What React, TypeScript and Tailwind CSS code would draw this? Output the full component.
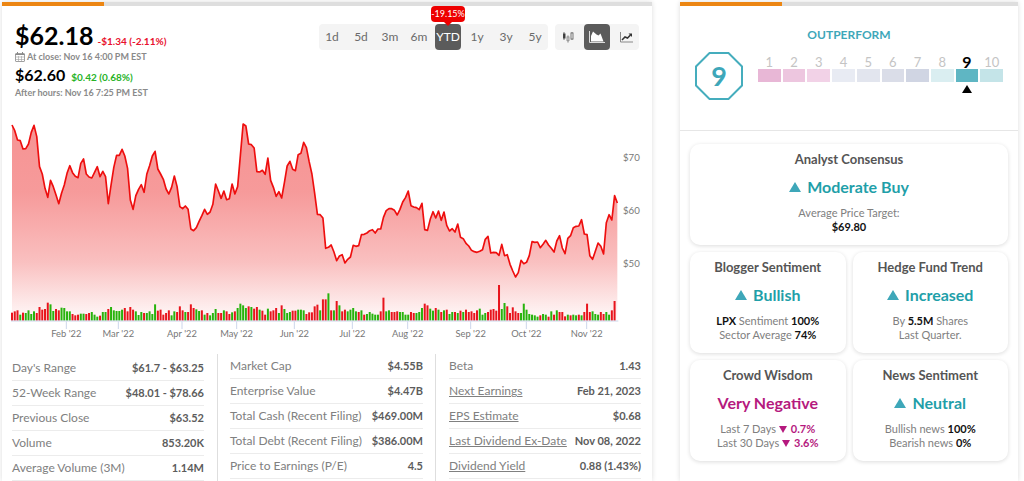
import type { ReactNode } from 'react';

const RANGES = ['1d', '5d', '3m', '6m', 'YTD', '1y', '3y', '5y'];

// Closing price line, as heights in chart units (0 is the top of the plot)
const LINE = `45 62 90 92 117 116 102 67 46 80 170 192 235 262 211 230 255 281 250 225 190 167 188 199 203
160 147 192 201 204 187 170 200 184 200 281 225 172 136 136 118 138 175 270 298 257 238 224 247 192
167 138 124 177 192 208 237 252 232 198 230 290 296 288 298 357 362 353 334 317 298 313 306 283 222
243 265 243 269 266 222 252 230 136 42 48 102 104 114 185 186 181 193 144 211 232 259 245 264 218
168 154 178 182 134 130 97 113 155 192 250 313 314 324 415 412 405 426 452 438 434 459 448 441 406
409 407 374 373 369 362 359 369 357 357 322 302 296 296 301 315 298 276 263 243 287 291 293 299 280
359 361 328 305 324 303 331 306 346 363 356 366 342 382 386 400 408 421 425 427 424 419 388 379 429
427 428 436 403 437 434 463 483 501 488 451 461 457 437 395 397 396 413 403 391 405 415 426 393 377
414 431 385 377 353 349 348 329 372 374 437 448 424 399 409 432 338 314 330 257 279`
  .split(/\s+/)
  .map(Number);

// Daily volume: bar height and direction (r = down, g = up)
const VOLUME = `24r 28r 31r 18g 24r 23g 31g 20g 28g 23r 41r 33r 35r 54r 49g 29g 35r 31r 39g 38g 28g 28g 20r 16r 18r
21g 21g 20r 23r 26g 18g 12g 15r 26g 26g 35r 41g 31g 29g 29g 33g 38r 28r 41r 33r 28g 17g 26g 23r 23g
28g 20g 49g 30r 33r 18r 23r 31r 16g 28g 26r 43r 31r 26g 26r 49r 38r 34g 29g 31r 18g 23r 16g 23g 35g
23r 23r 31g 28r 20r 25g 28r 38g 51g 46g 38g 43r 41g 36r 41r 33g 30r 18r 36g 28r 31r 38r 23g 46r 35g
23g 26g 30r 30r 33g 33g 31g 20r 25r 25r 43r 48r 31g 64r 64r 82g 31r 31g 59r 46g 28r 33r 28g 33g 38g
28g 26r 31g 18r 20g 26g 21g 18g 18g 28r 69r 28g 31g 26r 26r 28r 26g 26g 18g 18g 26r 23r 23g 26g 38g
51r 46r 36g 30g 38r 33g 26r 31g 33r 20g 26g 26r 23g 30r 26g 33r 26r 28r 23r 31r 36g 18g 23g 26r 33r
35r 30r 107r 35g 53g 43r 23r 40r 28r 23r 23g 51g 33g 20g 18g 16g 12g 16r 20g 18g 12r 28g 18r 31g 26r
26r 13r 18g 16r 18g 16g 18r 16g 26r 51r 26r 28g 20g 18g 26r 20r 26g 18g 31r 59r`
  .split(/\s+/)
  .map((bar) => ({ height: parseInt(bar, 10), up: bar.endsWith('g') }));

const MONTHS = [
  { label: "Feb '22", x: 199 },
  { label: "Mar '22", x: 355 },
  { label: "Apr '22", x: 546 },
  { label: "May '22", x: 710 },
  { label: "Jun '22", x: 883 },
  { label: "Jul '22", x: 1057 },
  { label: "Aug '22", x: 1223 },
  { label: "Sep '22", x: 1412 },
  { label: "Oct '22", x: 1579 },
  { label: "Nov '22", x: 1760 },
];

const PRICES = [
  { label: '$70', y: 141 },
  { label: '$60', y: 300 },
  { label: '$50', y: 460 },
];

const STATS = [
  [
    { label: "Day's Range", value: '$61.7 - $63.25' },
    { label: '52-Week Range', value: '$48.01 - $78.66' },
    { label: 'Previous Close', value: '$63.52' },
    { label: 'Volume', value: '853.20K' },
    { label: 'Average Volume (3M)', value: '1.14M' },
  ],
  [
    { label: 'Market Cap', value: '$4.55B' },
    { label: 'Enterprise Value', value: '$4.47B' },
    { label: 'Total Cash (Recent Filing)', value: '$469.00M' },
    { label: 'Total Debt (Recent Filing)', value: '$386.00M' },
    { label: 'Price to Earnings (P/E)', value: '4.5' },
  ],
  [
    { label: 'Beta', value: '1.43' },
    { label: 'Next Earnings', value: 'Feb 21, 2023', link: true },
    { label: 'EPS Estimate', value: '$0.68', link: true },
    { label: 'Last Dividend Ex-Date', value: 'Nov 08, 2022', link: true },
    { label: 'Dividend Yield', value: '0.88 (1.43%)', link: true },
  ],
];

const COLUMN_STYLES = ['pt-0.5 pr-[13px]', 'border-l border-[#dedede] px-3', 'border-l border-[#dedede] pl-[13px]'];

const SCORES = [
  'bg-[#e8b7d6]',
  'bg-[#edc6df]',
  'bg-[#f2d2e7]',
  'bg-[#e8ebf3]',
  'bg-[#e2e5ee]',
  'bg-[#dadde8]',
  'bg-[#d0d5e3]',
  'bg-[#daeef1]',
  'bg-[#5fb6c3]',
  'bg-[#c4e4e8]',
];

const LEFT = 36;
const RIGHT = 1852;
const BASE = 632;

function Panel({ className, children }: { className?: string; children: ReactNode }) {
  return (
    <section className={`min-w-0 bg-white shadow-[0_0_5px_rgba(0,0,0,0.14)] ${className ?? ''}`}>
      <div className="h-1 bg-[#dedede]">
        <div className="h-1 w-[102px] bg-[#ec8613]" />
      </div>
      {children}
    </section>
  );
}

function PriceChart() {
  const step = (RIGHT - LEFT) / (LINE.length - 1);
  const points = LINE.map((y, i) => `${LEFT + i * step},${y}`).join(' ');

  return (
    <svg viewBox="6 0 1950 732" className="block w-full" role="img" aria-label="Year to date price chart">
      <defs>
        <linearGradient id="area" x1="0" y1="42" x2="0" y2={BASE} gradientUnits="userSpaceOnUse">
          <stop offset="0" stopColor="#f58a8a" stopOpacity="0.92" />
          <stop offset="0.35" stopColor="#f58a8a" stopOpacity="0.86" />
          <stop offset="0.7" stopColor="#f58a8a" stopOpacity="0.54" />
          <stop offset="1" stopColor="#f58a8a" stopOpacity="0.04" />
        </linearGradient>
      </defs>
      <polygon points={`${LEFT},${BASE} ${points} ${RIGHT},${BASE}`} fill="url(#area)" />
      {VOLUME.map((bar, i) => (
        <rect
          key={i}
          x={LEFT - 3 + i * step}
          y={BASE - bar.height}
          width="6"
          height={bar.height}
          fill={bar.up ? '#27b30c' : '#e8141c'}
        />
      ))}
      <polyline points={points} fill="none" stroke="#ee0e0e" strokeWidth="5" strokeLinejoin="round" />
      <line x1="33" x2="1855" y1="633" y2="633" stroke="#ccd6eb" strokeWidth="3" />
      {MONTHS.map(({ label, x }) => (
        <g key={label}>
          <line x1={x} x2={x} y1="634" y2="657" stroke="#ccd6eb" strokeWidth="3" />
          <text x={x} y="682" textAnchor="middle" fontSize="28" fill="#777">
            {label}
          </text>
        </g>
      ))}
      {PRICES.map(({ label, y }) => (
        <text key={label} x="1869" y={y + 11} fontSize="29" fill="#777">
          {label}
        </text>
      ))}
    </svg>
  );
}

function ChartControls() {
  return (
    <div className="flex gap-[7px] text-xs text-[#6b6b6b]">
      <div className="flex h-[26px] gap-[3px] rounded bg-[#f4f4f4]">
        {RANGES.map((range) => (
          <button
            key={range}
            className={
              range === 'YTD'
                ? 'relative w-[26px] rounded bg-[#5b5b5b] text-white'
                : 'w-[26px]'
            }
          >
            {range}
            {range === 'YTD' && (
              <span className="absolute -top-[18px] left-1/2 flex h-4 w-[34px] -translate-x-1/2 items-center justify-center rounded bg-[#ee0000] text-[9px] text-white">
                -19.15%
                <span className="absolute top-full border-x-4 border-t-4 border-x-transparent border-t-[#ee0000]" />
              </span>
            )}
          </button>
        ))}
      </div>
      <div className="flex h-[26px] gap-[3px] rounded bg-[#f4f4f4]">
        <button className="flex w-[26px] items-center justify-center" aria-label="Candlestick chart">
          <svg viewBox="0 0 12 12" className="size-3" stroke="#777">
            <path d="M2 1v8M6 4.5v7M10 1v8" />
            <rect x="1.5" y="3" width="1.5" height="4" fill="#333" stroke="#444" />
            <rect x="5" y="6" width="2" height="3.5" fill="#ccc" stroke="#999" />
            <rect x="9" y="2" width="2" height="6" fill="#f4f4f4" />
          </svg>
        </button>
        <button className="flex w-[26px] items-center justify-center rounded bg-[#5b5b5b]" aria-label="Area chart">
          <svg viewBox="0 0 18 14" className="h-3.5 w-[18px]" fill="none">
            <path d="M1.5 1v11.5H17" stroke="#ddd" />
            <path d="M3 11.5V6L5 1.5L8.5 4.5L10.5 5.5L12.5 3.5L15.5 11.5Z" fill="#fff" />
          </svg>
        </button>
        <button className="flex w-[26px] items-center justify-center" aria-label="Line chart">
          <svg viewBox="0 0 14 12" className="h-3 w-3.5" fill="none">
            <path d="M1.5 1v10H14" stroke="#888" />
            <path d="M3 9L6 6L8.5 7L11.5 4" stroke="#333" strokeWidth="1.5" />
            <path d="M9.5 2.5H13V6Z" fill="#333" />
          </svg>
        </button>
      </div>
    </div>
  );
}

function CalendarIcon() {
  return (
    <svg viewBox="0 0 10 10" className="size-2.5" stroke="#a0a0a0" fill="none">
      <rect x="0.5" y="1.5" width="9" height="8" rx="0.5" />
      <path d="M0.5 2.5h9M2.5 0v2M7.5 0v2" stroke="#8a8a8a" />
      <path d="M1 5h8M1 7.5h8M3.5 4v5M6.5 4v5" strokeWidth="0.6" />
    </svg>
  );
}

function Quote() {
  return (
    <div className="text-[9px] leading-[14px] font-bold text-[#8a8a8a]">
      <div className="flex items-baseline gap-1">
        <span className="text-[25px] leading-[30px] text-black">$62.18</span>
        <span className="text-[10px] text-[#e8112d]">-$1.34 (-2.11%)</span>
      </div>
      <div className="flex items-center gap-0.5">
        <CalendarIcon />
        At close: Nov 16 4:00 PM EST
      </div>
      <div className="flex items-baseline gap-1.5">
        <span className="text-[16px] leading-[22px] text-black">$62.60</span>
        <span className="text-[10px] text-[#27b327]">$0.42 (0.68%)</span>
      </div>
      <div>After hours: Nov 16 7:25 PM EST</div>
    </div>
  );
}

function Stats() {
  return (
    <div className="grid grid-cols-[205fr_218fr_206fr] pr-[11px] pl-2.5">
      {STATS.map((rows, i) => (
        <dl key={i} className={`text-xs ${COLUMN_STYLES[i]}`}>
          {rows.map(({ label, value, link }: { label: string; value: string; link?: boolean }) => (
            <div
              key={label}
              className="flex h-[25px] items-center justify-between border-b border-[#ececec] whitespace-nowrap"
            >
              <dt className="text-[#808080]">
                {link ? (
                  <a href="#" className="underline">
                    {label}
                  </a>
                ) : (
                  label
                )}
              </dt>
              <dd className="text-[11px] font-bold text-[#5c5c5c]">{value}</dd>
            </div>
          ))}
        </dl>
      ))}
    </div>
  );
}

function SmartScore() {
  return (
    <div className="border-b border-[#e6e6e6] px-[15px] pt-[22px] pb-[30px]">
      <h2 className="text-center text-xs leading-[14px] font-bold text-[#3ea7b9]">OUTPERFORM</h2>
      <div className="mt-2.5 flex gap-[15px]">
        <div className="grid">
          <svg viewBox="0 0 48 48" className="col-start-1 row-start-1 size-12" fill="none">
            <path d="M14.5 1H33.5L47 14.5V33.5L33.5 47H14.5L1 33.5V14.5Z" stroke="#45adbd" strokeWidth="2" />
          </svg>
          <span className="col-start-1 row-start-1 place-self-center text-[27px] leading-8 font-bold text-[#3ea7b9]">9</span>
        </div>
        <ol className="mt-[3px] flex flex-1 gap-0.5 text-center text-[13px] leading-[14px] text-[#c4c4c4]">
          {SCORES.map((color, i) => (
            <li key={color} className="flex flex-1 flex-col items-center">
              {i === 8 ? <b className="text-base leading-[14px] text-black">9</b> : i + 1}
              <span className={`h-[13px] w-full ${color}`} />
              {i === 8 && <span className="mt-[3px] border-x-[5px] border-b-8 border-x-transparent border-b-black" />}
            </li>
          ))}
        </ol>
      </div>
    </div>
  );
}

interface CardProps {
  title: string;
  rating: string;
  negative?: boolean;
  wide?: boolean;
  children: ReactNode;
}

function Card({ title, rating, negative, wide, children }: CardProps) {
  return (
    <article
      className={`rounded-[10px] pt-2 pb-[11px] text-center text-[11px] leading-[14px] text-[#808080] shadow-[0_1px_4px_rgba(0,0,0,0.14)] ${wide ? 'col-span-2' : ''}`}
    >
      <h3 className="text-[13px] leading-[14px] font-bold text-[#555]">{title}</h3>
      <p
        className={`mt-[11px] mb-[9px] flex items-center justify-center gap-1.5 text-base leading-5 font-bold ${negative ? 'text-[#b5197e]' : 'text-[#1f9fa9]'}`}
      >
        {!negative && <span className="border-x-[6px] border-b-[10px] border-x-transparent border-b-[#3ea7b9]" />}
        {rating}
      </p>
      {children}
    </article>
  );
}

function Strong({ children }: { children: ReactNode }) {
  return <b className="text-[#111]">{children}</b>;
}

function Drop({ children }: { children: ReactNode }) {
  return (
    <b className="text-[#b5197e]">
      <span className="mr-1 inline-block border-x-4 border-t-[7px] border-x-transparent border-t-[#b5197e]" />
      {children}
    </b>
  );
}

export default function App() {
  return (
    <main className="flex min-h-screen gap-7 bg-white pt-0.5 pr-1.5 pl-0.5 font-[Lato,sans-serif]">
      <Panel className="flex-[650]">
        <div className="flex h-[104px] items-start justify-between pr-[13px] pl-[13px]">
          <div className="pt-3.5">
            <Quote />
          </div>
          <div className="pt-[18px]">
            <ChartControls />
          </div>
        </div>
        <PriceChart />
        <Stats />
      </Panel>

      <Panel className="flex-[338]">
        <SmartScore />
        <div className="grid grid-cols-2 gap-[7px] px-2.5 pt-[13px]">
          <Card title="Analyst Consensus" rating="Moderate Buy" wide>
            <p>Average Price Target:</p>
            <p>
              <Strong>$69.80</Strong>
            </p>
          </Card>
          <Card title="Blogger Sentiment" rating="Bullish">
            <p>
              <Strong>LPX</Strong> Sentiment <Strong>100%</Strong>
            </p>
            <p>
              Sector Average <Strong>74%</Strong>
            </p>
          </Card>
          <Card title="Hedge Fund Trend" rating="Increased">
            <p>
              By <Strong>5.5M</Strong> Shares
            </p>
            <p>Last Quarter.</p>
          </Card>
          <Card title="Crowd Wisdom" rating="Very Negative" negative>
            <p>
              Last 7 Days <Drop>0.7%</Drop>
            </p>
            <p>
              Last 30 Days <Drop>3.6%</Drop>
            </p>
          </Card>
          <Card title="News Sentiment" rating="Neutral">
            <p>
              Bullish news <Strong>100%</Strong>
            </p>
            <p>
              Bearish news <Strong>0%</Strong>
            </p>
          </Card>
        </div>
      </Panel>
    </main>
  );
}
